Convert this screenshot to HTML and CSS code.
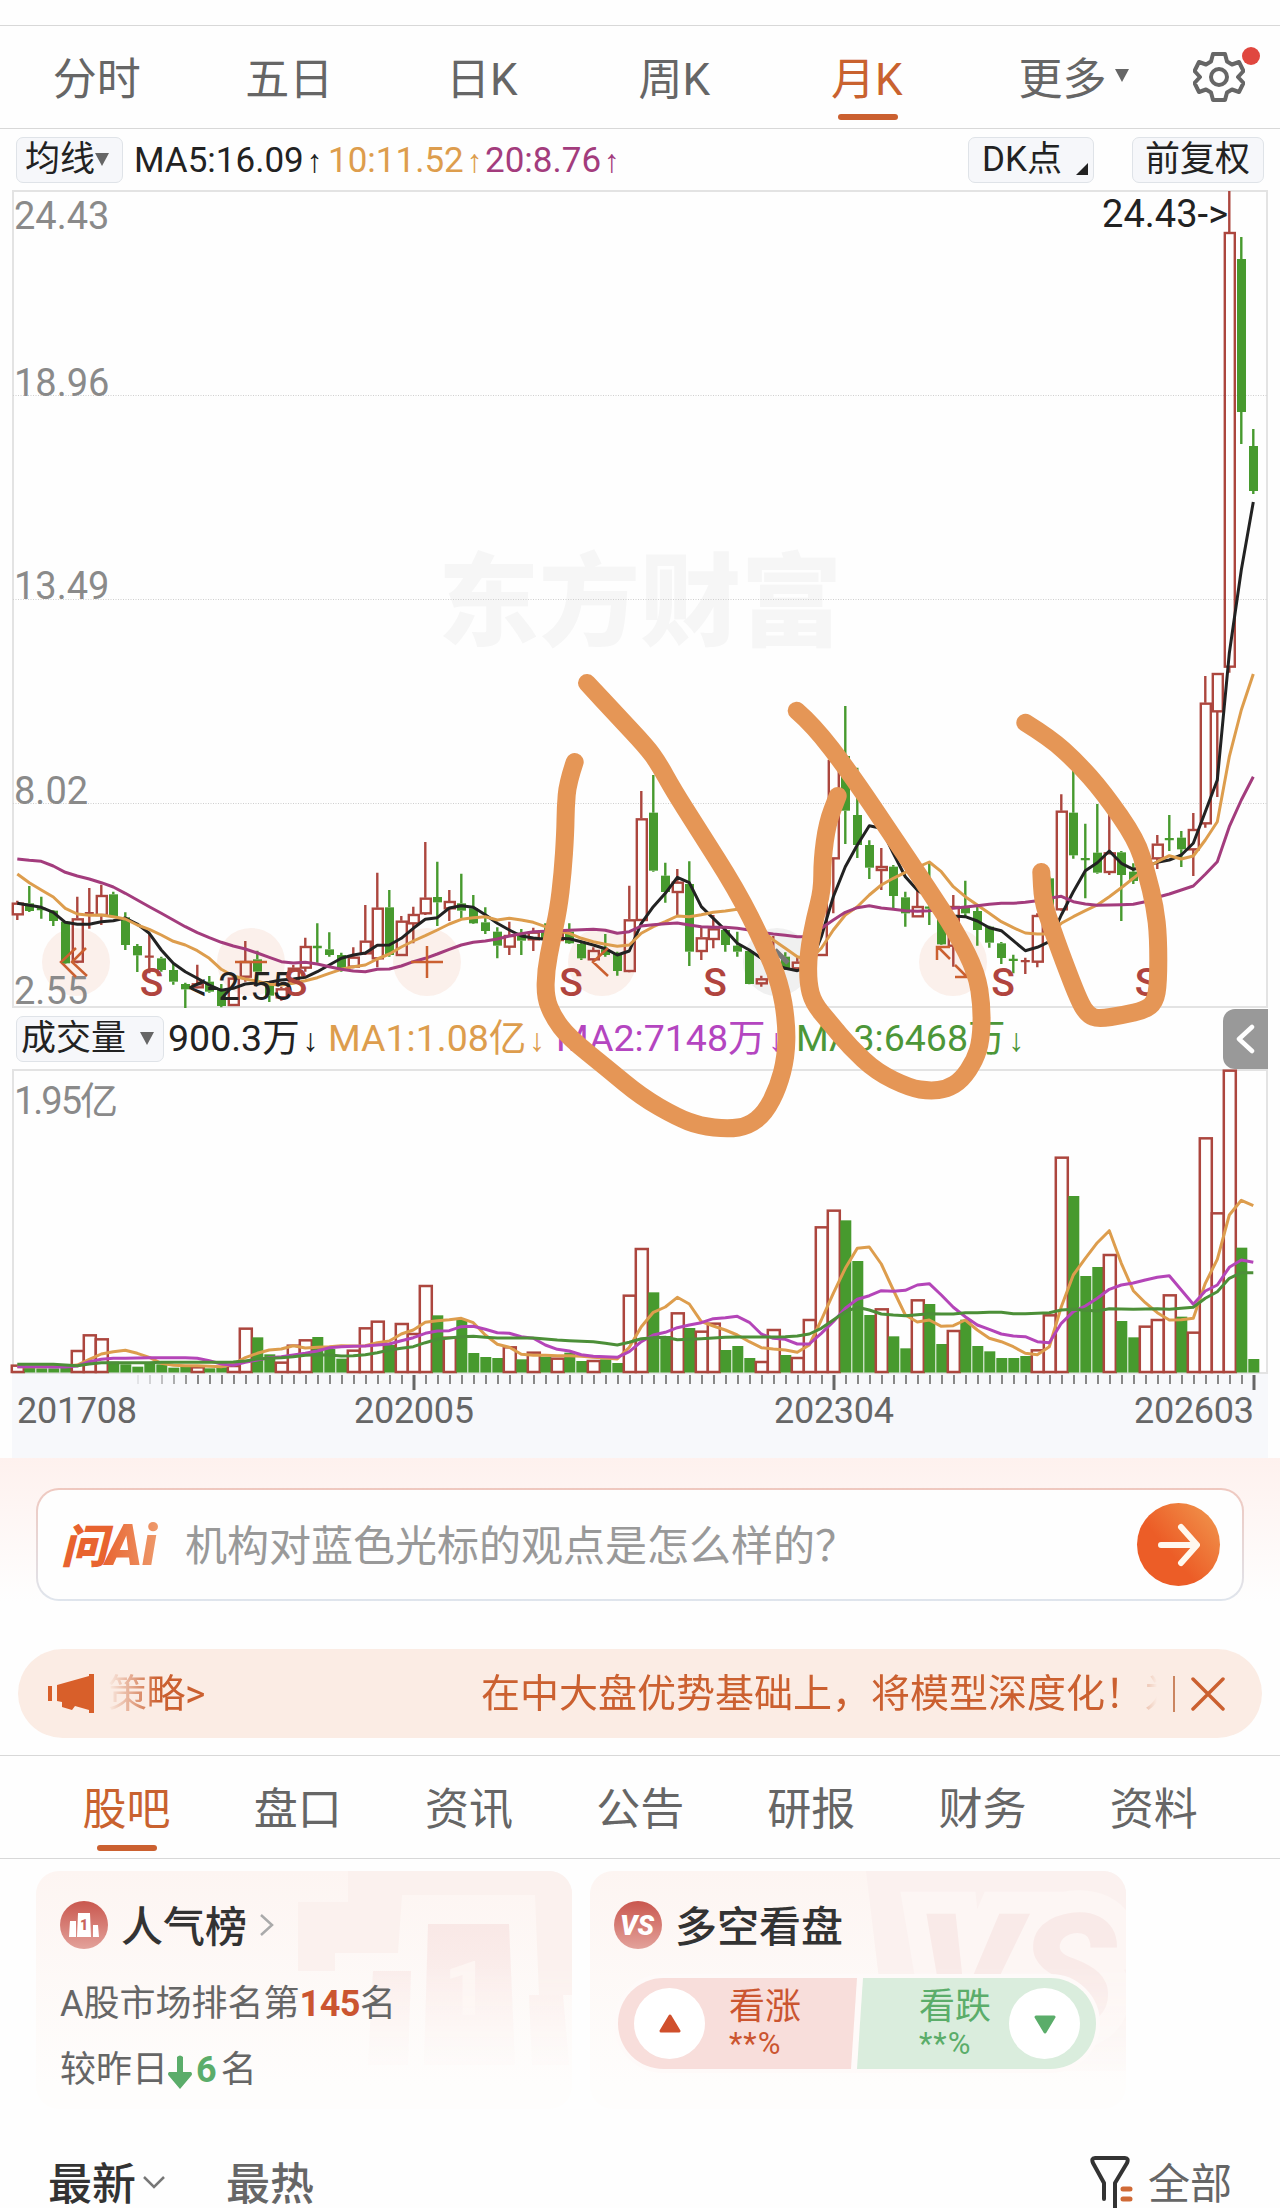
FILE: index.html
```html
<!DOCTYPE html>
<html lang="zh-CN">
<head>
    <meta charset="UTF-8">
    <meta name="viewport" content="width=device-width, initial-scale=1.0">
    <title>月K</title>
    <link rel="stylesheet" href="styles.css">
</head>
<body>
    <nav class="period-tabs">
        <span class="tab">分时</span>
        <span class="tab">五日</span>
        <span class="tab">日K</span>
        <span class="tab">周K</span>
        <span class="tab active">月K</span>
        <span class="tab more">更多<i class="caret"></i></span>
        <span class="settings">
            <svg width="52" height="52" viewBox="-26 -26 52 52" fill="none" stroke="#666" stroke-width="4" stroke-linejoin="round">
                <path d="M-6 -23H6L8 -15.500L13 -12.500L20 -15L24.500 -6L19 0L24.500 6L20 15L13 12.500L8 15.500L6 23H-6L-8 15.500L-13 12.500L-20 15L-24.500 6L-19 0L-24.500 -6L-20 -15L-13 -12.500L-8 -15.500Z"/>
                <circle r="8"/>
            </svg>
            <i class="dot"></i>
        </span>
    </nav>

    <section class="chart">
        <div class="ma-bar">
            <span class="btn">均线<i class="caret"></i></span>
            <span class="ma ma5">MA5:16.09<b>↑</b></span>
            <span class="ma ma10">10:11.52<b>↑</b></span>
            <span class="ma ma20">20:8.76<b>↑</b></span>
            <span class="btn dk">DK点<i class="corner"></i></span>
            <span class="btn">前复权</span>
        </div>
        <svg class="kline" id="kline" width="1280" height="818" viewBox="0 190 1280 818"></svg>
        <div class="vol-bar">
            <span class="btn">成交量<i class="caret"></i></span>
            <span class="vol">900.3万<b>↓</b></span>
            <span class="vol v1">MA1:1.08亿<b>↓</b></span>
            <span class="vol v2">MA2:7148万<b>↓</b></span>
            <span class="vol v3">MA3:6468万<b>↓</b></span>
            <span class="collapse">
                <svg width="20" height="30" viewBox="0 0 20 30" fill="none" stroke="#fff" stroke-width="4.500" stroke-linecap="round" stroke-linejoin="round"><path d="M16 3L3 15L16 27"/></svg>
            </span>
        </div>
        <svg class="volume" id="volume" width="1280" height="305" viewBox="0 1069 1280 305"></svg>
        <svg class="axis" id="axis" width="1280" height="84" viewBox="0 1374 1280 84"></svg>
        <svg class="pen" id="pen" width="1280" height="1329" viewBox="0 129 1280 1329"></svg>
    </section>

    <section class="ask">
        <div class="ask-box">
            <svg class="ask-logo" width="100" height="56" viewBox="0 0 100 56">
                <defs>
                    <linearGradient id="warm" x1="0" y1="0" x2="1" y2="0">
                        <stop offset="0" stop-color="#e8632f"/>
                        <stop offset="1" stop-color="#ee9a6c"/>
                    </linearGradient>
                </defs>
                <text x="1" y="46" font-size="46" fill="#e8632f">问</text>
                <text x="46" y="48" font-size="57" fill="url(#warm)" textLength="51" lengthAdjust="spacingAndGlyphs">Ai</text>
            </svg>
            <span class="ask-text">机构对蓝色光标的观点是怎么样的？</span>
            <span class="ask-go">
                <svg width="42" height="44" viewBox="0 0 42 44" fill="none" stroke="#fff8ee" stroke-width="6" stroke-linecap="round" stroke-linejoin="round"><path d="M3 22H38M23 4L39 22L23 40"/></svg>
            </span>
        </div>
    </section>

    <section class="notice">
        <svg width="46" height="40" viewBox="0 0 46 40" fill="#d85f2a">
            <path d="M0 12H4V27H0ZM9 11L41 2V0H46V39H41V36L27 32L24 36L14 33V28L9 27Z"/>
        </svg>
        <div class="marquee">
            <span class="old">策略&gt;</span>
            <span class="msg">在中大盘优势基础上，将模型深度化！为</span>
        </div>
        <i class="bar"></i>
        <svg width="34" height="34" viewBox="0 0 34 34" stroke="#cb6030" stroke-width="3.500" stroke-linecap="round"><path d="M2 2L32 32M32 2L2 32"/></svg>
    </section>

    <nav class="info-tabs">
        <span class="tab active">股吧</span>
        <span class="tab">盘口</span>
        <span class="tab">资讯</span>
        <span class="tab">公告</span>
        <span class="tab">研报</span>
        <span class="tab">财务</span>
        <span class="tab">资料</span>
    </nav>

    <section class="cards">
        <div class="card">
            <svg class="card-bg" width="536" height="238" viewBox="0 0 536 238">
                <defs>
                    <linearGradient id="fade" x1="0" y1="0" x2="0" y2="1">
                        <stop offset="0" stop-color="#f9e8e6"/>
                        <stop offset="1" stop-color="#fdf6f4"/>
                    </linearGradient>
                </defs>
                <path d="M262 31H312V0H536V124H503L499 24H366L362 82H299V100H262Z" fill="#fbf1ee"/>
                <path d="M337 100H375L372 194H332ZM392 53H473L479 194H388ZM493 124H527L533 194H496Z" fill="url(#fade)"/>
                <text x="408" y="144" class="big-one">1</text>
            </svg>
            <div class="card-head">
                <svg width="48" height="48" viewBox="0 0 48 48">
                    <defs>
                        <linearGradient id="badge" x1="0" y1="0" x2="0" y2="1">
                            <stop offset="0" stop-color="#c9574e"/>
                            <stop offset="1" stop-color="#e3a29b"/>
                        </linearGradient>
                    </defs>
                    <circle cx="24" cy="24" r="24" fill="url(#badge)"/>
                    <path d="M10 20H16V36H9ZM18 12H30L31 36H17ZM33 24H38L39 36H33Z" fill="#fff"/>
                    <text x="20" y="29" font-size="14" font-weight="900" fill="#c9645c">1</text>
                </svg>
                <h3>人气榜</h3>
                <svg width="16" height="24" viewBox="0 0 16 24" fill="none" stroke="#aaa" stroke-width="2.500"><path d="M2 2L13 12L2 22"/></svg>
            </div>
            <p>A股市场排名第<b class="up">145</b>名</p>
            <p>较昨日<svg width="24" height="36" viewBox="0 0 24 36" fill="#5bad6a"><path d="M9 3Q12 0 15 3V18H23Q25 20 23 22L12 35L1 22Q-1 20 1 18H9Z"/></svg><b class="down">6</b>名</p>
        </div>
        <div class="card">
            <svg class="card-bg" width="536" height="238" viewBox="0 0 536 238">
                <path d="M276 0H536V200H300Z" fill="#fbf1ef"/>
                <text x="326" y="156" class="big-vs" textLength="200" lengthAdjust="spacingAndGlyphs">VS</text>
            </svg>
            <div class="card-head">
                <svg width="48" height="48" viewBox="0 0 48 48">
                    <circle cx="24" cy="24" r="24" fill="url(#badge)"/>
                    <text x="23" y="34" text-anchor="middle" font-size="28" font-weight="900" font-style="italic" fill="#fff" textLength="34" lengthAdjust="spacingAndGlyphs">VS</text>
                </svg>
                <h3>多空看盘</h3>
            </div>
            <div class="vote">
                <div class="rise">
                    <span class="knob"><svg width="22" height="22" viewBox="0 0 22 22"><path d="M11 3L20 18H2Z" fill="#d04f2c" stroke="#d04f2c" stroke-width="3" stroke-linejoin="round"/></svg></span>
                    <span class="label">看涨<small>**%</small></span>
                </div>
                <div class="fall">
                    <span class="label">看跌<small>**%</small></span>
                    <span class="knob"><svg width="22" height="22" viewBox="0 0 22 22"><path d="M11 19L20 4H2Z" fill="#5bad6a" stroke="#5bad6a" stroke-width="3" stroke-linejoin="round"/></svg></span>
                </div>
            </div>
        </div>
    </section>

    <footer class="sort">
        <span class="current">最新</span>
        <svg width="24" height="14" viewBox="0 0 24 14" fill="none" stroke="#777" stroke-width="2.500"><path d="M2 1L12 11L22 1"/></svg>
        <span class="hot">最热</span>
        <svg class="filter" width="44" height="56" viewBox="0 0 44 56" fill="none" stroke="#333" stroke-width="4" stroke-linecap="round" stroke-linejoin="round">
            <path d="M14 44V28L3 8Q1 3 5 3H35Q39 3 37 8L25 28V54"/>
            <path d="M33 34H40M33 44H40" stroke="#d06a36" stroke-width="5"/>
        </svg>
        <span class="all">全部</span>
    </footer>
    <script src="script.js"></script>
</body>
</html>
```
FILE: styles.css
```css
* {
    box-sizing: border-box;
}
body {
    margin: 0;
    padding-top: 25px;
    width: 1280px;
    height: 2208px;
    overflow: hidden;
    background: #fefefe;
    color: #666;
    font-family: Roboto, "Noto Sans CJK SC", sans-serif;
    line-height: 1;
}
svg {
    display: block;
    flex: none;
}
i, em {
    font-style: normal;
}
h3, p {
    margin: 0;
}
.caret {
    display: inline-block;
    border: 7px solid transparent;
    border-top: 13px solid #666;
    border-bottom: 0;
}

/* period tabs */
.period-tabs {
    display: grid;
    grid-template-columns: repeat(5, 192.500px) 208px 1fr;
    height: 104px;
    border-top: 1px solid #d8d8d8;
    border-bottom: 1px solid #d8d8d8;
}
.tab {
    display: flex;
    align-items: center;
    justify-content: center;
    position: relative;
    font-size: 44px;
}
.period-tabs .tab {
    padding-top: 5px;
    padding-left: 1px;
}
.tab.active {
    color: #c9622f;
}
.tab.active::after {
    content: "";
    position: absolute;
    left: calc(50% - 30px);
    bottom: 7px;
    width: 60px;
    height: 6px;
    border-radius: 3px;
    background: #cb6030;
}
.period-tabs .active::after {
    left: calc(50% - 28px);
    bottom: 8px;
}
.period-tabs .more {
    gap: 8px;
    padding-left: 14px;
}
.more .caret {
    margin-top: -8px;
}
.settings {
    position: relative;
    display: flex;
    align-items: center;
    padding-left: 22px;
}
.dot {
    position: absolute;
    left: 71px;
    top: 21px;
    width: 18px;
    height: 18px;
    border-radius: 50%;
    background: #e0473f;
}

/* chart */
.chart {
    position: relative;
    height: 1329px;
}
.ma-bar, .vol-bar {
    display: flex;
    align-items: center;
    height: 61px;
    color: #222;
    font-size: 35px;
}
.ma-bar {
    padding: 0 16px;
}
.ma-bar b, .vol-bar b {
    display: inline-block;
    width: 22px;
    font-family: "Liberation Sans", sans-serif;
    font-size: 32px;
    font-weight: normal;
    text-align: center;
}
.btn {
    display: flex;
    align-items: center;
    height: 46px;
    padding: 0 8px;
    border: 1px solid #dfe3e8;
    border-radius: 7px;
    background: #f6f7fa;
    white-space: nowrap;
}
.ma-bar .btn:first-child {
    width: 107px;
    margin-right: 11px;
}
.ma-bar .btn:last-child {
    width: 132px;
    padding-left: 12px;
}
.ma5 {
    width: 194px;
}
.ma10 {
    width: 157px;
}
.ma {
    padding-top: 2px;
    white-space: nowrap;
}
.ma10, .v1 {
    color: #dd9d4d;
}
.ma20 {
    color: #a33c7d;
}
.ma-bar .dk {
    width: 126px;
    margin-left: auto;
    margin-right: 38px;
    padding-left: 13px;
    justify-content: space-between;
    padding-right: 5px;
}
.corner {
    align-self: flex-end;
    margin-bottom: 7px;
    border-left: 12px solid transparent;
    border-bottom: 12px solid #222;
}
.vol-bar {
    display: grid;
    grid-template-columns: 148px 160px 228px 240px 1fr 45px;
    padding: 0 12px 0 16px;
    font-size: 37.500px;
}
.vol-bar .btn {
    padding: 0 9px 0 4px;
    font-size: 35px;
    justify-content: space-between;
}
.vol {
    padding-left: 4px;
    padding-top: 1px;
    white-space: nowrap;
}
.v2 {
    color: #b445c0;
}
.v3 {
    color: #4c9638;
}
.collapse {
    display: flex;
    align-items: center;
    justify-content: center;
    height: 60px;
    border-radius: 12px 0 0 12px;
    background: #999;
}
.pen {
    position: absolute;
    left: 0;
    top: 0;
}
.grid {
    fill: none;
    stroke: #e3e3e3;
    stroke-width: 2;
}
.dots {
    stroke: #cfcfcf;
    stroke-dasharray: 1 1.500;
}
.price {
    font-size: 38px;
    fill: #8a8a8a;
}
.mark {
    font-size: 38px;
    fill: #222;
}
.sell {
    font-size: 39px;
    font-weight: 500;
    fill: #b0443e;
    text-anchor: middle;
}
.brand {
    font-size: 101px;
    font-weight: 900;
    fill: #f6f6f6;
}
.date {
    font-size: 36px;
    fill: #666;
}

/* ask box */
.ask {
    height: 191px;
    padding: 30px 36px;
    background: linear-gradient(#fef1ee, #fefefe 75%);
}
.ask-box {
    display: flex;
    align-items: center;
    height: 113px;
    padding: 0 22px;
    border: 2px solid transparent;
    border-radius: 23px;
    background: linear-gradient(#fefefe, #fefefe) padding-box, linear-gradient(#efc8bf, #dfe5ed) border-box;
}
.ask-logo {
    margin-right: 25px;
    font-weight: 900;
    font-style: italic;
}
.ask-text {
    padding-top: 4px;
    color: #999;
    font-size: 42px;
    white-space: nowrap;
}
.ask-go {
    display: flex;
    align-items: center;
    justify-content: center;
    width: 83px;
    height: 83px;
    margin-left: auto;
    border-radius: 50%;
    background: linear-gradient(50deg, #ec5d27 40%, #f19a50);
}

/* notice */
.notice {
    display: flex;
    align-items: center;
    height: 89px;
    margin: 0 18px;
    padding: 0 37px 0 30px;
    border-radius: 45px;
    background: #fbece4;
    color: #cb6030;
}
.marquee {
    display: flex;
    width: 1050px;
    margin: 0 16px 0 14px;
    overflow: hidden;
    font-size: 39px;
    line-height: 60px;
    white-space: nowrap;
    -webkit-mask-image: linear-gradient(90deg, transparent, #000 50px, #000 1010px, transparent);
    mask-image: linear-gradient(90deg, transparent, #000 50px, #000 1010px, transparent);
}
.old {
    width: 373px;
    flex: none;
    letter-spacing: -0.500px;
}
.bar {
    width: 2px;
    height: 36px;
    margin-right: 16px;
    background: #cb8560;
}

/* info tabs */
.info-tabs {
    display: grid;
    grid-template-columns: repeat(7, 171.200px);
    height: 104px;
    margin-top: 17px;
    padding-left: 41px;
    border-top: 1px solid #d8d8d8;
    border-bottom: 1px solid #d8d8d8;
}
.info-tabs .tab {
    padding-top: 5px;
}

/* cards */
.cards {
    display: flex;
    gap: 18px;
    padding: 12px 36px 0;
}
.card {
    position: relative;
    width: 536px;
    height: 238px;
    padding: 27px 24px;
    border-radius: 23px;
    overflow: hidden;
    background: linear-gradient(#fdf5f2, #fefdfc 90%);
}
.card-bg {
    position: absolute;
    left: 0;
    top: 0;
    -webkit-mask-image: linear-gradient(#000 40%, transparent 90%);
    mask-image: linear-gradient(#000 40%, transparent 90%);
}
.big-one {
    font-size: 76px;
    font-weight: 900;
    fill: #fdf5f2;
}
.big-vs {
    font-size: 160px;
    font-weight: 900;
    font-style: italic;
    fill: #f9eae8;
    stroke: #fdf6f4;
    stroke-width: 44px;
    paint-order: stroke;
}
.card-head {
    position: relative;
    display: flex;
    align-items: center;
    gap: 13px;
    height: 54px;
    margin-bottom: 24px;
}
.card-head h3 {
    padding-top: 5px;
    color: #333;
    font-size: 42px;
    font-weight: 500;
}
.card-head h3 + svg {
    margin-left: -1px;
}
.card p {
    position: relative;
    display: flex;
    align-items: center;
    height: 54px;
    margin-bottom: 12px;
    padding-top: 1px;
    font-size: 36px;
}
.up {
    color: #cb5530;
    letter-spacing: -0.500px;
}
.card p svg {
    margin: 4px 4px 0 0;
}
.down {
    color: #5bad6a;
    margin-right: 4px;
}
.vote {
    position: relative;
    display: flex;
    width: 486px;
    height: 99px;
    margin: -2px 0 0 0;
    border: 4px solid #fefaf9;
    border-radius: 50px;
    overflow: hidden;
    background: #fefaf9;
}
.rise, .fall {
    display: flex;
    align-items: center;
    height: 91px;
}
.rise {
    width: 239px;
    padding-left: 16px;
    background: #f8dedb;
    color: #cb5530;
    clip-path: polygon(0 0, 100% 0, calc(100% - 6px) 100%, 0 100%);
}
.fall {
    width: 239px;
    padding-right: 16px;
    justify-content: flex-end;
    background: #daeddd;
    color: #5bad6a;
    clip-path: polygon(6px 0, 100% 0, 100% 100%, 0 100%);
}
.label {
    display: flex;
    flex-direction: column;
    font-size: 36px;
    gap: 3px;
}
.rise .label {
    margin-left: 24px;
}
.fall .label {
    margin-right: 18px;
}
.label small {
    font-size: 31px;
    letter-spacing: 1px;
}
.knob {
    display: flex;
    align-items: center;
    justify-content: center;
    width: 71px;
    height: 71px;
    border-radius: 50%;
    background: #fff;
}

/* sort row */
.sort {
    display: flex;
    align-items: center;
    height: 66px;
    margin-top: 41px;
    padding: 0 48px;
    font-size: 44px;
}
.sort span {
    padding-top: 4px;
}
.sort .current, .sort .hot {
    font-weight: 500;
}
.sort .current {
    color: #333;
    margin-right: 6px;
}
.hot {
    margin-left: 60px;
}
.filter {
    margin-left: auto;
    margin-right: 14px;
}
.all {
    font-size: 42px;
}
```
FILE: script.js
```js
const RED = '#ac463e';
const GREEN = '#479a2e';

// one row per month: high, body top, body bottom, low, 1 = rise / 0 = fall
const candles = [
    [722,728,763,780,1],[678,730,753,756,0],[710,744,750,776,0],[750,752,783,798,0],[785,785,910,912,0],
    [710,775,905,910,1],[684,757,762,806,1],[674,705,765,795,1],[695,703,768,770,0],[757,772,855,870,0],
    [852,858,886,936,0],[820,888,892,940,1],[890,895,930,935,0],[910,930,965,974,0],[968,972,988,1044,0],
    [914,970,982,985,1],[948,965,995,998,0],[972,990,1038,1042,0],[950,953,1035,1038,1],[843,903,950,965,1],
    [872,898,935,960,0],[970,975,1007,1026,0],[980,985,1012,1022,1],[915,923,965,970,1],[833,858,923,935,1],
    [790,858,864,908,0],[817,868,885,890,0],[878,885,925,935,0],[862,890,920,925,1],[735,842,880,885,1],
    [638,743,895,922,1],[690,742,885,890,0],[768,782,885,888,1],[740,762,790,850,1],[546,713,760,765,1],
    [605,711,727,798,0],[690,723,745,783,1],[641,730,752,775,0],[705,745,790,792,0],[742,787,813,822,0],
    [802,815,857,895,0],[785,825,860,885,1],[807,818,842,885,0],[803,815,838,873,1],[790,810,838,845,0],
    [790,810,840,850,1],[790,815,850,852,0],[848,852,895,900,0],[862,870,898,902,1],[822,868,885,890,0],
    [875,880,933,947,0],[677,778,933,937,1],[393,475,780,783,1],[345,458,632,635,0],[608,647,696,728,0],
    [627,665,696,765,1],[604,672,875,918,0],[800,832,873,900,1],[765,805,837,865,1],[800,810,855,875,0],
    [815,857,875,890,0],[870,873,972,973,0],[947,955,970,980,1],[828,940,950,955,1],[877,890,925,930,0],
    [890,905,925,930,1],[860,870,900,910,1],[690,700,885,888,1],[290,300,595,760,1],[138,288,452,552,0],
    [323,465,555,594,0],[541,555,623,657,0],[564,618,630,690,1],[615,620,708,745,0],[695,712,760,800,0],
    [670,738,769,770,1],[610,740,746,795,0],[750,755,853,855,0],[705,738,857,920,1],[662,743,760,768,0],
    [740,753,810,857,0],[797,800,848,863,0],[846,850,894,912,0],[884,898,901,940,0],[893,902,905,942,1],
    [760,765,905,922,1],[650,655,745,750,0],[403,452,748,752,1],[330,458,586,596,0],[491,595,600,715,0],
    [432,578,638,641,0],[460,577,636,645,1],[573,577,645,783,0],[610,635,663,672,0],[560,595,610,640,1],
    [525,551,595,627,1],[465,535,540,573,0],[513,533,568,621,0],[459,507,568,648,1],[48,128,490,503,1],
    [39,39,154,411,1],[-1407,-1284,20,38,1],[-1269,-1203,-744,-648,0],[-693,-642,-507,-498,0]
];

const ma5 = [730,736,742,757,787,793,793,785,782,774,792,820,870,910,935,955,975,991,985,972,969,967,960,957,952,935,915,895,885,879,856,855,835,805,778,773,744,737,742,764,790,810,828,834,838,835,836,845,855,866,885,873,790,740,700,652,668,740,775,810,850,870,895,910,925,932,920,830,710,620,555,497,505,580,650,690,715,750,768,770,783,803,812,842,872,862,845,765,695,632,608,573,610,628,620,607,600,585,550,455,360,-20,-270,-474];
const ma10 = [642,668,690,711,745,762,766,765,770,777,795,808,825,844,855,872,895,928,948,957,964,973,975,970,962,953,940,928,920,915,897,882,861,843,827,810,792,778,773,770,780,775,780,787,800,812,820,835,845,853,859,855,820,800,785,768,770,764,757,753,748,770,810,840,865,890,900,865,810,765,740,705,675,655,637,622,606,635,680,710,735,760,785,803,819,822,822,790,770,752,735,710,683,655,625,605,587,597,588,540,485,290,150,42];
const ma20 = [597,601,604,618,637,648,657,668,681,700,720,740,760,780,800,818,833,847,858,867,879,892,905,909,907,912,920,928,933,935,928,927,918,905,895,882,868,855,847,843,837,828,821,815,814,812,811,809,808,811,820,815,798,794,791,789,795,800,802,802,805,810,817,822,826,830,830,805,780,757,743,737,744,748,752,754,752,748,745,741,737,733,730,730,727,722,715,709,725,732,736,735,734,733,725,712,702,690,678,643,605,500,420,350];

// bar tops, negative = falling month
const volumes = [917,-922,-925,-925,-922,873,826,838,-905,-913,-920,-908,-913,-923,-918,922,-925,-922,918,806,-832,-883,908,857,841,-831,-867,-896,872,805,785,-855,792,822,678,-766,833,-779,-879,-891,-894,862,-898,878,-890,896,-878,-903,903,-898,-909,707,567,-697,-828,760,-804,815,791,-870,-858,-894,906,810,-885,894,780,502,452,-481,-603,-765,748,-829,-865,721,-732,-852,813,-779,-858,-874,-894,-894,-888,871,766,293,-408,-648,-621,585,-783,-832,800,780,706,-770,818,235,460,32,-563,-897];
const volA = [920,920,920,919,918,915,898,882,875,871,880,892,910,916,917,917,919,920,912,893,880,870,867,857,864,862,860,857,858,857,848,843,822,810,787,782,779,775,788,825,853,862,883,886,886,887,887,889,892,894,897,862,800,757,741,712,732,785,798,810,825,845,863,867,870,877,855,780,700,625,565,561,612,690,765,786,780,799,797,780,810,835,845,860,880,884,860,740,645,595,548,512,610,692,728,758,780,779,775,670,598,465,421,437];
const volB = [920,920,920,921,921,918,905,898,895,895,894,893,893,893,893,895,902,912,916,907,900,893,890,885,880,873,863,860,859,858,855,852,842,833,820,813,812,800,799,808,818,820,830,835,855,868,873,884,889,890,892,875,845,825,817,803,795,788,776,773,769,787,822,835,838,852,852,820,785,745,718,707,692,694,691,675,671,705,742,770,795,808,822,828,830,845,848,790,755,738,715,688,675,669,660,652,647,690,733,693,675,622,600,607];
const volC = [913,913,913,913,915,917,912,908,908,908,908,908,907,907,907,907,907,907,906,903,897,895,893,890,886,884,885,888,887,884,878,870,865,860,848,838,834,830,829,832,834,834,834,834,837,840,842,844,845,850,855,847,836,833,832,839,838,836,834,832,831,831,831,831,830,828,822,805,780,755,742,750,762,765,767,764,761,762,762,758,758,757,757,761,761,760,758,750,748,751,753,746,747,748,747,746,748,745,742,715,695,655,638,638];

const x = i => 17.3 + 12 * i;
const py = v => 660 + v / 3;
const vy = v => 1060 + v / 3;

function line(data, y, color) {
    const points = data.map((v, i) => x(i).toFixed(1) + ',' + y(v).toFixed(1)).join(' ');
    return `<polyline points="${points}" fill="none" stroke="${color}" stroke-width="3" stroke-linejoin="round"/>`;
}

function drawKline() {
    let s = '<text class="brand" x="438" y="638">东方财富</text>';
    s += '<rect class="grid" x="13" y="191" width="1254" height="816"/>';
    [395.5, 599.5, 803.5].forEach(y => s += `<path class="dots" d="M13 ${y}H1267"/>`);
    [76, 251, 427, 602, 777, 953].forEach(cx => {
        s += `<circle cx="${cx}" cy="962" r="34" fill="${cx === 777 ? '#f0f0f0' : '#fbf0eb'}"/>`;
    });
    [[24.43, 229], [18.96, 395.5], [13.49, 599], [8.02, 804], [2.55, 1004]].forEach(p => {
        s += `<text class="price" x="14" y="${p[1]}">${p[0].toFixed(2)}</text>`;
    });
    candles.forEach((c, i) => {
        const color = c[4] ? RED : GREEN;
        const [hi, top, bottom, lo] = c.slice(0, 4).map(py);
        s += `<path d="M${x(i)} ${hi}V${top}M${x(i)} ${bottom}V${lo}" stroke="${color}" stroke-width="2.4"/>`;
        if (bottom - top < 2.5) {
            s += `<path d="M${x(i) - 4.5} ${(top + bottom) / 2}h9M${x(i)} ${top}V${bottom}" stroke="${color}" stroke-width="2.4"/>`;
        } else if (c[4]) {
            s += `<rect x="${x(i) - 4.5}" y="${top + 1}" width="10" height="${bottom - top - 1}" fill="none" stroke="${color}" stroke-width="2.4"/>`;
        } else {
            s += `<rect x="${x(i) - 4.3}" y="${top}" width="9" height="${bottom - top}" fill="${color}"/>`;
        }
    });
    s += line(ma5, py, '#222') + line(ma10, py, '#dd9d4d') + line(ma20, py, '#a33c7d');
    s += '<g fill="none" stroke="#cb6030" stroke-width="2.5"><path d="M76 948L61 962L76 977M86 948L72 962L87 976M235 962H267M411 962H443M427 946V978M608 948L593 962L608 976M937 960V947H950M938 947L950 959M955 965L967 977M955 977H967V965"/></g>';
    s += '<path d="M775 950L788 963" stroke="#777" stroke-width="5"/>';
    s += '<text class="mark" x="188" y="1000" textLength="105">&lt;-2.55</text>';
    s += '<text class="mark" x="1102" y="227" textLength="126">24.43-&gt;</text>';
    [152, 296, 571.5, 715.5, 1003.5, 1147].forEach(cx => s += `<text class="sell" x="${cx - 0.5}" y="996">S</text>`);
    document.getElementById('kline').innerHTML = s;
}

function drawVolume() {
    let s = '<rect class="grid" x="13" y="1070" width="1254" height="303"/>';
    s += '<text class="price" x="14" y="1114" textLength="104">1.95亿</text>';
    volumes.forEach((v, i) => {
        const top = vy(Math.abs(v));
        if (v > 0) {
            s += `<rect x="${x(i) - 5.5}" y="${top}" width="12" height="${1372 - top}" fill="#fefefe" stroke="${RED}" stroke-width="2.5"/>`;
        } else {
            s += `<rect x="${x(i) - 5}" y="${top}" width="11" height="${1372.5 - top}" fill="${GREEN}"/>`;
        }
    });
    s += line(volA, vy, '#dd9d4d') + line(volB, vy, '#b445b8') + line(volC, vy, '#4c8f38');
    document.getElementById('volume').innerHTML = s;
}

function drawAxis() {
    let s = '<rect x="12" y="1374" width="1256" height="84" fill="#f7f8fb"/>';
    for (let i = 10; i <= 103; i++) {
        const major = i === 33 || i === 68 || i === 103;
        const opacity = Math.min(1, (i - 9) / 6);
        s += `<path d="M${x(i) + 0.7} 1375V${major ? 1390 : 1384}" stroke="${major ? '#666' : '#888'}" stroke-width="${major ? 3 : 2}" opacity="${opacity}"/>`;
    }
    s += '<text class="date" x="17" y="1423" textLength="120">201708</text>';
    s += '<text class="date" x="414" y="1423" text-anchor="middle" textLength="120">202005</text>';
    s += '<text class="date" x="834" y="1423" text-anchor="middle" textLength="120">202304</text>';
    s += '<text class="date" x="1254" y="1423" text-anchor="end" textLength="120">202603</text>';
    document.getElementById('axis').innerHTML = s;
}

// hand-drawn loops around the three earlier peaks
const strokes = [
    [[574.7,762],[567.7,783],[565.7,807],[565.3,833],[562.7,873],[558.3,910],[551.7,940],[546,970],[545.3,997],[553.3,1017],[568.3,1037],[606.7,1068],[641.7,1097],[676.7,1117],[700,1126],[728.3,1129],[748.3,1126],[765,1113],[778.3,1087],[786,1057],[786.7,1023],[780,983],[763.3,943],[736.7,890],[696.7,827],[673.3,790],[658.3,763],[646.7,747],[616.7,715],[587,683]],
    [[796.7,710.7],[813.3,725],[850,773],[893.3,837],[926.7,887],[956.7,933],[976.7,973],[982,1007],[981,1040],[975,1060],[961.7,1080],[946.7,1089],[930,1091],[910,1088],[876.7,1072],[850,1047],[830,1023],[813.3,1003],[808,983],[808.3,953],[815,918],[822.3,890],[822.3,860],[827.3,823],[837.7,796]],
    [[1025.3,722.7],[1050,738],[1076.7,762],[1103.3,792],[1136.7,840],[1146.7,873],[1155,907],[1158.3,937],[1158.3,983],[1155,1002],[1145,1010],[1123.3,1015],[1098.3,1019],[1088.3,1015],[1080,1003],[1063.3,960],[1050,923],[1042.7,900],[1041.3,872]]
];

function drawPen() {
    document.getElementById('pen').innerHTML = strokes.map(p => {
        let d = `M${p[0]}`;
        for (let i = 1; i < p.length - 1; i++) {
            d += `Q${p[i]} ${(p[i][0] + p[i + 1][0]) / 2},${(p[i][1] + p[i + 1][1]) / 2}`;
        }
        d += `L${p[p.length - 1]}`;
        return `<path d="${d}" fill="none" stroke="#e59656" stroke-width="18" stroke-linecap="round" stroke-linejoin="round"/>`;
    }).join('');
}

drawKline();
drawVolume();
drawAxis();
drawPen();
```
